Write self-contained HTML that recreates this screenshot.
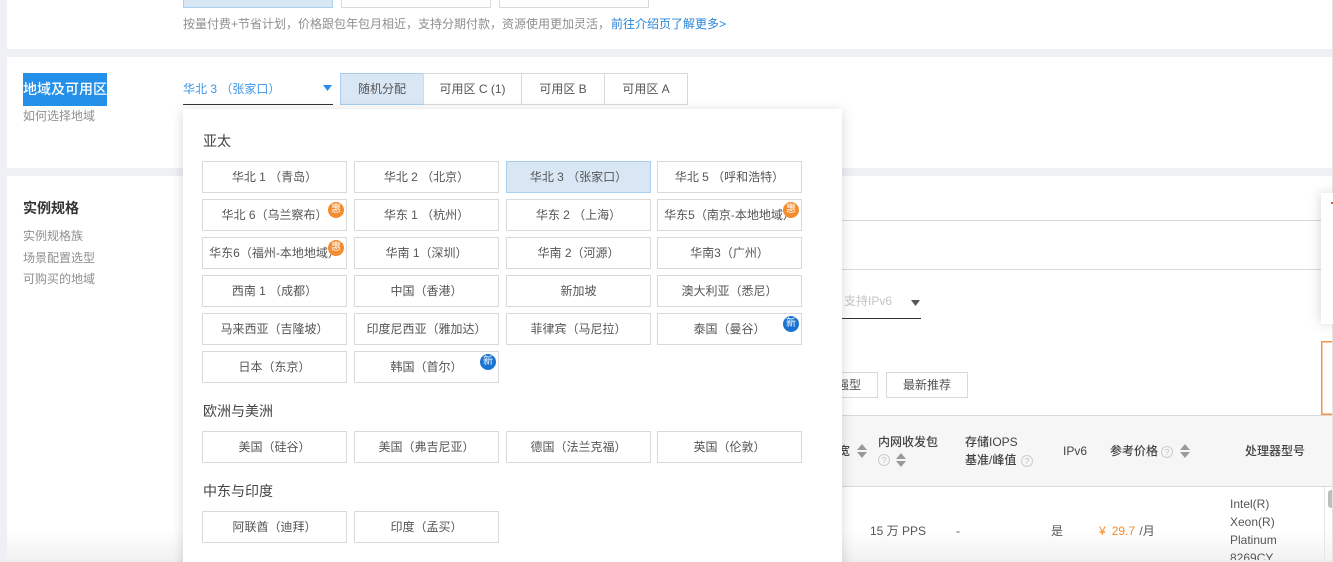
<!DOCTYPE html>
<html lang="zh">
<head>
<meta charset="utf-8">
<style>
html,body{margin:0;padding:0;width:1333px;height:562px;overflow:hidden}
body{background:#eff0f4;font-family:"Liberation Sans","Noto Sans CJK SC",sans-serif;font-size:12px;color:#555}
#w{position:relative;width:1333px;height:562px;overflow:hidden;background:#eff0f4}
.a{position:absolute;white-space:nowrap}
.p{position:absolute;background:#fff;left:7px;width:1325px}
.b{position:absolute;box-sizing:border-box;border:1px solid #d9d9d9;background:#fff;text-align:center;height:32px;line-height:30px;width:145px;white-space:nowrap;font-size:12px;color:#555}
.sel{background:#d9e7f5;border-color:#a9cfee}
.bd{position:absolute;width:16px;height:16px;border-radius:50%;color:#fff;font-size:10px;line-height:16px;text-align:center;top:2px;right:2px}
.o{background:#f28c2e}
.n{background:#1a73d1}
.h{font-size:14px;color:#444;left:203px}
.g{color:#8f8f8f;font-size:12px}
.th{font-size:12px;color:#444;font-weight:500}
.s{position:absolute;width:10px;height:14px}
</style>
</head>
<body>
<div id="w">
<div class="p" style="top:0;height:49px"></div>
<div class="p" style="top:57px;height:111px"></div>
<div class="p" style="top:176px;height:386px"></div>

<div class="a" style="left:183px;top:-1px;width:150px;height:9px;box-sizing:border-box;border:1px solid #a9cfee;background:#d9e7f5"></div>
<div class="a" style="left:341px;top:-1px;width:150px;height:9px;box-sizing:border-box;border:1px solid #d9d9d9"></div>
<div class="a" style="left:499px;top:-1px;width:150px;height:9px;box-sizing:border-box;border:1px solid #d9d9d9"></div>
<div class="a g" style="left:183px;top:16px;line-height:16px">按量付费+节省计划，价格跟包年包月相近，支持分期付款，资源使用更加灵活，<span style="color:#2a84d8;margin-left:1px">前往介绍页了解更多&gt;</span></div>

<div class="a" style="left:23px;top:73px;width:84px;height:33px;background:#2590ea;color:#fff;font-size:14px;line-height:33px;text-align:center;font-weight:500">地域及可用区</div>
<div class="a g" style="left:23px;top:108px;line-height:16px">如何选择地域</div>

<div class="a" style="left:183px;top:81px;line-height:16px;color:#3d97e8">华北 3 （张家口）</div>
<div class="a" style="left:183px;top:104px;width:150px;height:1px;background:#333"></div>
<svg class="a" style="left:323px;top:85px" width="9" height="6"><path d="M0 0H9L4.500 6Z" fill="#2590ea"/></svg>

<div class="b sel" style="left:340px;top:73px;width:84px">随机分配</div>
<div class="b" style="left:423px;top:73px;width:99px">可用区 C (1)</div>
<div class="b" style="left:521px;top:73px;width:84px">可用区 B</div>
<div class="b" style="left:604px;top:73px;width:84px">可用区 A</div>

<div class="a" style="left:23px;top:199px;font-size:14px;font-weight:700;color:#333;line-height:18px">实例规格</div>
<div class="a g" style="left:23px;top:228px;line-height:16px">实例规格族</div>
<div class="a g" style="left:23px;top:250px;line-height:16px">场景配置选型</div>
<div class="a g" style="left:23px;top:271px;line-height:16px">可购买的地域</div>

<div class="a" style="left:842px;top:220px;width:479px;height:1px;background:#d9d9d9"></div>
<div class="a" style="left:842px;top:269px;width:491px;height:1px;background:#d9d9d9"></div>
<div class="a" style="left:844px;top:293px;line-height:16px;color:#c4c4c4">支持IPv6</div>
<svg class="a" style="left:911px;top:300px" width="9" height="6"><path d="M0 0H9L4.500 6Z" fill="#555"/></svg>
<div class="a" style="left:842px;top:318px;width:79px;height:1px;background:#333"></div>

<div class="b" style="left:800px;top:372px;width:78px;height:26px;line-height:24px;text-align:right;padding-right:16px">增强型</div>
<div class="b" style="left:886px;top:372px;width:82px;height:26px;line-height:24px">最新推荐</div>

<div class="a" style="left:1321px;top:341px;width:14px;height:74px;box-sizing:border-box;border:1px solid #f2944a;box-shadow:inset 0 0 0 .5px #f2944a"></div>
<div class="a" style="left:842px;top:415px;width:490px;height:72px;box-sizing:border-box;background:#f6f6f6;border-top:1px solid #d9d9d9;border-bottom:1px solid #d9d9d9"></div>

<div class="a" style="left:7px;top:530px;width:1326px;height:30px;background:linear-gradient(to bottom,rgba(240,240,240,0),rgba(240,240,240,.9))"></div>

<div class="a th" style="left:830px;top:443px;line-height:16px;width:20px;overflow:hidden;text-align:right">宽</div>
<svg class="s" style="left:857px;top:444px"><path d="M5 0L10 6H0ZM5 14L0 8H10Z" fill="#9a9a9a"/></svg>
<div class="a th" style="left:878px;top:434px;line-height:16px">内网收发包</div>
<svg class="a" style="left:878px;top:454px" width="12" height="12"><circle cx="6" cy="6" r="5.500" fill="none" stroke="#ccc"/><text x="6" y="9" font-size="8" text-anchor="middle" fill="#bbb">?</text></svg>
<svg class="s" style="left:896px;top:453px"><path d="M5 0L10 6H0ZM5 14L0 8H10Z" fill="#9a9a9a"/></svg>
<div class="a th" style="left:965px;top:434px;line-height:16px">存储IOPS</div>
<div class="a th" style="left:965px;top:452px;line-height:16px">基准/峰值</div>
<svg class="a" style="left:1021px;top:455px" width="12" height="12"><circle cx="6" cy="6" r="5.500" fill="none" stroke="#ccc"/><text x="6" y="9" font-size="8" text-anchor="middle" fill="#bbb">?</text></svg>
<div class="a th" style="left:1063px;top:443px;line-height:16px">IPv6</div>
<div class="a th" style="left:1110px;top:443px;line-height:16px">参考价格</div>
<svg class="a" style="left:1161px;top:446px" width="12" height="12"><circle cx="6" cy="6" r="5.500" fill="none" stroke="#ccc"/><text x="6" y="9" font-size="8" text-anchor="middle" fill="#bbb">?</text></svg>
<svg class="s" style="left:1180px;top:444px"><path d="M5 0L10 6H0ZM5 14L0 8H10Z" fill="#9a9a9a"/></svg>
<div class="a th" style="left:1245px;top:443px;line-height:16px">处理器型号</div>

<div class="a" style="left:870px;top:523px;line-height:16px">15 万 PPS</div>
<div class="a" style="left:956px;top:523px;line-height:16px">-</div>
<div class="a" style="left:1051px;top:523px;line-height:16px">是</div>
<div class="a" style="left:1099px;top:523px;line-height:16px"><span style="color:#f28c2e">¥<span style="margin-left:6px">29.7</span></span><span style="margin-left:1px"> /月</span></div>
<div class="a" style="left:1230px;top:495px;line-height:18px">Intel(R)<br>Xeon(R)<br>Platinum<br>8269CY</div>
<div class="a" style="left:1324px;top:487px;width:1px;height:75px;background:#e6e6e6"></div>
<div class="a" style="left:1328px;top:490px;width:5px;height:18px;background:#bdbdbd;border-radius:3px 0 0 3px"></div>

<div class="a" style="left:0;top:560px;width:1333px;height:2px;background:#eee"></div>

<div class="a" style="left:1332px;top:0;width:1px;height:562px;background:#e4e4e8"></div>
<div class="a" style="left:1321px;top:193px;width:12px;height:131px;background:#fff;box-shadow:0 0 12px rgba(0,0,0,.18)"></div>
<div class="a" style="left:1331px;top:202px;width:2px;height:2px;background:#e0602a"></div>

<div class="a" style="left:183px;top:109px;width:659px;height:480px;background:#fff;box-shadow:0 2px 12px rgba(0,0,0,.16)"></div>
<div class="a h" style="top:132px;line-height:18px">亚太</div>

<div class="b" style="left:202px;top:161px">华北 1 （青岛）</div>
<div class="b" style="left:354px;top:161px">华北 2 （北京）</div>
<div class="b sel" style="left:506px;top:161px">华北 3 （张家口）</div>
<div class="b" style="left:657px;top:161px">华北 5 （呼和浩特）</div>

<div class="b" style="left:202px;top:199px">华北 6（乌兰察布）<span class="bd o">惠</span></div>
<div class="b" style="left:354px;top:199px">华东 1 （杭州）</div>
<div class="b" style="left:506px;top:199px">华东 2 （上海）</div>
<div class="b" style="left:657px;top:199px">华东5（南京-本地地域）<span class="bd o">惠</span></div>

<div class="b" style="left:202px;top:237px">华东6（福州-本地地域）<span class="bd o">惠</span></div>
<div class="b" style="left:354px;top:237px">华南 1（深圳）</div>
<div class="b" style="left:506px;top:237px">华南 2（河源）</div>
<div class="b" style="left:657px;top:237px">华南3（广州）</div>

<div class="b" style="left:202px;top:275px">西南 1 （成都）</div>
<div class="b" style="left:354px;top:275px">中国（香港）</div>
<div class="b" style="left:506px;top:275px">新加坡</div>
<div class="b" style="left:657px;top:275px">澳大利亚（悉尼）</div>

<div class="b" style="left:202px;top:313px">马来西亚（吉隆坡）</div>
<div class="b" style="left:354px;top:313px">印度尼西亚（雅加达）</div>
<div class="b" style="left:506px;top:313px">菲律宾（马尼拉）</div>
<div class="b" style="left:657px;top:313px">泰国（曼谷）<span class="bd n">新</span></div>

<div class="b" style="left:202px;top:351px">日本（东京）</div>
<div class="b" style="left:354px;top:351px">韩国（首尔）<span class="bd n">新</span></div>

<div class="a h" style="top:402px;line-height:18px">欧洲与美洲</div>
<div class="b" style="left:202px;top:431px">美国（硅谷）</div>
<div class="b" style="left:354px;top:431px">美国（弗吉尼亚）</div>
<div class="b" style="left:506px;top:431px">德国（法兰克福）</div>
<div class="b" style="left:657px;top:431px">英国（伦敦）</div>

<div class="a h" style="top:482px;line-height:18px">中东与印度</div>
<div class="b" style="left:202px;top:511px">阿联酋（迪拜）</div>
<div class="b" style="left:354px;top:511px">印度（孟买）</div>
</div>
</body>
</html>
